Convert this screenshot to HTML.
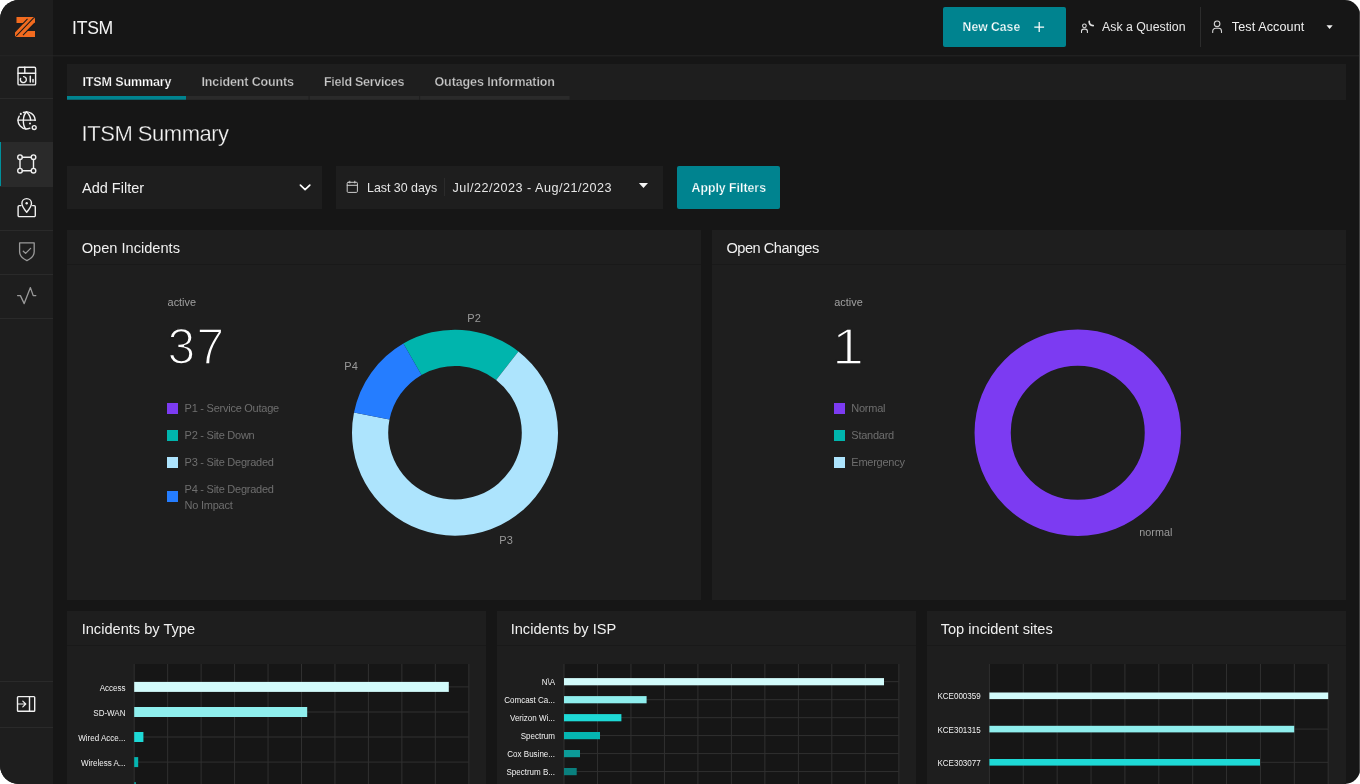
<!DOCTYPE html>
<html lang="en">
<head>
<meta charset="utf-8">
<title>ITSM Summary</title>
<style>
*{margin:0;padding:0;box-sizing:border-box}
html,body{width:1360px;height:784px;overflow:hidden;background:#fff}
body{font-family:"Liberation Sans", sans-serif;-webkit-font-smoothing:antialiased}
.app{position:relative;width:1360px;height:784px;background:#161616;border-radius:19px 15px 15px 18.5px;overflow:hidden}
.layer{position:absolute;left:0;top:0;width:1360px;height:784px;will-change:transform}
.b{position:absolute;display:block;border:0}
.t{position:absolute;display:block;white-space:nowrap;font-weight:400;font-style:normal;text-decoration:none}
ul{list-style:none}
.big{-webkit-text-stroke:1.6px #1e1e1e;paint-order:fill stroke}
.semi{-webkit-text-stroke:0.25px #1e1e1e;paint-order:fill stroke}
.thin{-webkit-text-stroke:0.3px #161616;paint-order:fill stroke}
.one{transform:scaleX(1.16);transform-origin:25px 0}
.onteal{-webkit-text-stroke-color:#00838f}
</style>
</head>
<body>
<div class="app"><div class="layer">
<aside class="sidebar">
<div class="b side-bg" style="left:0px;top:0px;width:53px;height:784px;background:#1e1e1e;"></div>
<svg class="b logo" style="left:15px;top:17px;" width="20" height="20" viewBox="0 0 20 20"><path fill="#f26b1f" d="M1.5 0H18.6L20 1.4V5.6L11.6 14H20V20H1.7L0 18.9V15.4L9 6H1.5Z"/><path stroke="#1b1b1b" stroke-width="1.05" fill="none" d="M18.9 0.6L1.3 18.9M12.5 1.9L8.2 6.3M8.0 18.1L19.8 6.2"/></svg>
<nav><ul class="nav">
<li class="b sep" style="left:0px;top:98px;width:53px;height:1px;background:#2a2a2a;"></li>
<li class="b sep" style="left:0px;top:186px;width:53px;height:1px;background:#2a2a2a;"></li>
<li class="b sep" style="left:0px;top:230px;width:53px;height:1px;background:#2a2a2a;"></li>
<li class="b sep" style="left:0px;top:274px;width:53px;height:1px;background:#2a2a2a;"></li>
<li class="b sep" style="left:0px;top:318px;width:53px;height:1px;background:#2a2a2a;"></li>
<li class="b nav-active" style="left:0px;top:142px;width:53px;height:44px;background:#2a2a2a;border-left:1px solid #00909c;box-sizing:border-box;"></li>
<li><a><svg class="b ico" style="left:16px;top:65px;" width="22" height="22" viewBox="0 0 22 22"><g fill="none" stroke="#f0f0f0" stroke-width="1.4" stroke-linecap="round" stroke-linejoin="round"><rect x="2" y="2.3" width="17.6" height="17.6" rx="1.2"/><path d="M2 8.3H19.6M8.8 2.3V8.3"/><path d="M7.6 11.6A3 3 0 1 1 4.6 13.4"/><path d="M14.3 11.3V17M17 14.5V17" stroke-width="1.5"/></g></svg></a></li>
<li><a><svg class="b ico" style="left:16px;top:109px;" width="22" height="22" viewBox="0 0 22 22"><g fill="none" stroke="#f0f0f0" stroke-width="1.4" stroke-linecap="round" stroke-linejoin="round"><path d="M7.42 3.52A8.5 8.5 0 0 1 19.10 11.40"/><path d="M13.92 19.22A8.5 8.5 0 0 1 3.24 7.15"/><path d="M2.10 11.10H19.40"/><path d="M10.60 2.90C6.40 6.40 6.40 16.40 9.80 19.90"/><path d="M10.60 2.90C13.20 5.40 14.60 8.40 14.70 11.10"/><circle cx="18.20" cy="18.55" r="1.95"/><circle cx="4.80" cy="4.90" r="1.05" fill="#f0f0f0" stroke="none"/><circle cx="14.00" cy="14.60" r="1.0" fill="#f0f0f0" stroke="none"/></g></svg></a></li>
<li><a><svg class="b ico" style="left:16px;top:153px;" width="22" height="22" viewBox="0 0 22 22"><g fill="none" stroke="#f0f0f0" stroke-width="1.4" stroke-linecap="round" stroke-linejoin="round"><circle cx="4" cy="4.2" r="2.3"/><circle cx="17.5" cy="4.2" r="2.3"/><circle cx="4" cy="17.7" r="2.3"/><circle cx="17.5" cy="17.7" r="2.3"/><path d="M6.3 4.2H15.2M6.3 17.7H15.2M4 6.5V15.4M17.5 6.5V15.4"/></g></svg></a></li>
<li><a><svg class="b ico" style="left:16px;top:197px;" width="22" height="22" viewBox="0 0 22 22"><g fill="none" stroke="#f0f0f0" stroke-width="1.4" stroke-linecap="round" stroke-linejoin="round"><path d="M5 8.6H3.3A1.2 1.2 0 0 0 2.1 9.8V18.4A1.2 1.2 0 0 0 3.3 19.6H18.1A1.2 1.2 0 0 0 19.3 18.4V9.8A1.2 1.2 0 0 0 18.1 8.6H16.6"/><path d="M10.7 15.2C7.4 11.2 5.9 8.8 5.9 6.4A4.8 4.8 0 0 1 15.5 6.4C15.5 8.8 14 11.2 10.7 15.2Z"/><circle cx="10.7" cy="6.2" r="1.2" fill="#f0f0f0" stroke="none"/></g></svg></a></li>
<li><a><svg class="b ico" style="left:16px;top:241px;" width="22" height="22" viewBox="0 0 22 22"><g fill="none" stroke="#9a9a9a" stroke-width="1.3" stroke-linecap="round" stroke-linejoin="round"><path d="M3.6 1.8H18.2V10.8C18.2 15 15 17.6 10.9 19.6C6.8 17.6 3.6 15 3.6 10.8Z"/><path d="M7.3 10.2L9.6 12.4L14.6 7.4"/></g></svg></a></li>
<li><a><svg class="b ico" style="left:16px;top:285px;" width="22" height="22" viewBox="0 0 22 22"><g fill="none" stroke="#9a9a9a" stroke-width="1.3" stroke-linecap="round" stroke-linejoin="round"><path d="M1.6 10.6H4.4L8.2 18.6L14.4 2.6L17.2 10.6H19.8"/></g></svg></a></li>
<li class="b sep" style="left:0px;top:681px;width:53px;height:1px;background:#2a2a2a;"></li>
<li class="b sep" style="left:0px;top:727px;width:53px;height:1px;background:#2a2a2a;"></li>
<li><a><svg class="b ico" style="left:16px;top:695px;" width="22" height="18" viewBox="0 0 22 18"><g fill="none" stroke="#f0f0f0" stroke-width="1.4" stroke-linecap="round" stroke-linejoin="round"><rect x="1.5" y="1.6" width="17.2" height="14.6" rx="0.8"/><path d="M13.5 1.6V16.2"/><path d="M1.5 9H9.6M6.8 6.1L9.8 9L6.8 11.9" stroke-width="1.15"/></g></svg></a></li>
</ul></nav>
</aside>
<header class="topbar">
<div class="b hline" style="left:0px;top:55px;width:1360px;height:1px;background:#262626;transform:translateY(0.3px);"></div>
<h2 class="t" style="left:72px;top:17.59px;font-size:17.6px;line-height:20.22px;color:#f4f4f4;letter-spacing:-0.25px;">ITSM</h2>
<button class="b btn" style="left:943px;top:7px;width:123px;height:40px;background:#00838f;border-radius:2px;"></button>
<span class="t semi onteal" style="left:962.6px;top:20.06px;font-size:12.2px;line-height:14.02px;color:#ffffff;font-weight:700;">New Case</span>
<svg class="b plus" style="left:1033px;top:21px;" width="12" height="12" viewBox="0 0 12 12"><path d="M6.2 1.1V10.9M1.3 6H11.1" stroke="#fff" stroke-width="1.25" fill="none"/></svg>
<svg class="b ico" style="left:1079px;top:19px;" width="17" height="16" viewBox="0 0 17 16"><g fill="none" stroke="#e0e0e0" stroke-width="1.05" stroke-linecap="round" stroke-linejoin="round"><circle cx="5.4" cy="6.8" r="1.85"/><path d="M2.5 13.4V12.2A2.1 2.1 0 0 1 4.6 10.1H6.3A2.1 2.1 0 0 1 8.4 12.2V13.4"/><path d="M10.2 2.3Q9.9 6.3 14.2 6.7" stroke-width="1.7"/></g></svg>
<span class="t" style="left:1102.1px;top:20.07px;font-size:12.3px;line-height:14.13px;color:#e8e8e8;">Ask a Question</span>
<div class="b vsep" style="left:1200px;top:7px;width:1px;height:40px;background:#2c2c2c;"></div>
<svg class="b ico" style="left:1210px;top:18px;" width="14" height="17" viewBox="0 0 14 17"><g fill="none" stroke="#d4d4d4" stroke-width="1.1" stroke-linecap="round" stroke-linejoin="round"><circle cx="7.1" cy="5.8" r="2.8"/><path d="M2.7 14.4V13.2A2.9 2.9 0 0 1 5.6 10.3H8.6A2.9 2.9 0 0 1 11.5 13.2V14.4"/></g></svg>
<span class="t" style="left:1231.8px;top:19.8px;font-size:12.6px;line-height:14.48px;color:#f0f0f0;letter-spacing:0.1px;">Test Account</span>
<svg class="b caret" style="left:1325px;top:24px;" width="9" height="6" viewBox="0 0 9 6"><path d="M1.5 1.2H7.7L4.6 5Z" fill="#f0f0f0"/></svg>
</header>
<main>
<nav class="tabs">
<div class="b tabbar" style="left:67px;top:64px;width:1279px;height:36px;background:#1e1e1e;"></div>
<a class="t semi" style="left:82.5px;top:74.69px;font-size:12.5px;line-height:14.36px;color:#ffffff;font-weight:700;letter-spacing:-0.12px;">ITSM Summary</a>
<a class="t semi" style="left:201.5px;top:74.69px;font-size:12.5px;line-height:14.36px;color:#c8c8c8;font-weight:700;letter-spacing:-0.14px;">Incident Counts</a>
<a class="t semi" style="left:324px;top:74.69px;font-size:12.5px;line-height:14.36px;color:#c8c8c8;font-weight:700;letter-spacing:-0.28px;">Field Services</a>
<a class="t semi" style="left:434.5px;top:74.69px;font-size:12.5px;line-height:14.36px;color:#c8c8c8;font-weight:700;letter-spacing:-0.1px;">Outages Information</a>
<svg class="b tab-lines" style="left:67px;top:96px;" width="520" height="4" viewBox="0 0 520 4"><rect x="0" y="0" width="119" height="3.7" fill="#00838f"/><rect x="119" y="0" width="122.6" height="3.7" fill="#2a2a2a"/><rect x="242.6" y="0" width="109.7" height="3.7" fill="#2a2a2a"/><rect x="353.1" y="0" width="149.5" height="3.7" fill="#2a2a2a"/></svg>
</nav>
<h1 class="t thin" style="left:81.6px;top:120.94px;font-size:22px;line-height:25.28px;color:#f4f4f4;letter-spacing:-0.48px;">ITSM Summary</h1>
<div class="filters">
<div class="b select" style="left:67px;top:166px;width:255px;height:43px;background:#1e1e1e;"></div>
<span class="t" style="left:82px;top:179.65px;font-size:14.5px;line-height:16.66px;color:#f0f0f0;">Add Filter</span>
<svg class="b chev" style="left:298px;top:182px;" width="14" height="11" viewBox="0 0 14 11"><path d="M2.4 3.2L7.1 7.6L11.8 3.2" stroke="#fff" stroke-width="1.7" fill="none" stroke-linecap="round" stroke-linejoin="round"/></svg>
<div class="b daterange" style="left:336px;top:166px;width:327px;height:43px;background:#1e1e1e;"></div>
<svg class="b ico" style="left:345px;top:179px;" width="14" height="15" viewBox="0 0 14 15"><g fill="none" stroke="#cfcfcf" stroke-width="1.0" stroke-linecap="round" stroke-linejoin="round"><rect x="2.2" y="3.3" width="10.2" height="10.1" rx="1"/><path d="M2.2 6.3H12.4M4.8 2.2V4M9.8 2.2V4"/></g></svg>
<span class="t" style="left:367px;top:180.98px;font-size:12.4px;line-height:14.25px;color:#e6e6e6;">Last 30 days</span>
<div class="b vsep" style="left:444px;top:178px;width:1px;height:18px;background:#2b2b2b;"></div>
<span class="t" style="left:452.5px;top:180.8px;font-size:12.6px;line-height:14.48px;color:#e6e6e6;letter-spacing:0.5px;">Jul/22/2023 - Aug/21/2023</span>
<svg class="b caret" style="left:637px;top:181px;" width="13" height="9" viewBox="0 0 13 9"><path d="M1.9 2H11L6.45 7Z" fill="#f4f4f4"/></svg>
<button class="b btn" style="left:677px;top:166px;width:103px;height:43px;background:#00838f;border-radius:2px;"></button>
<span class="t semi onteal" style="left:691.5px;top:180.97px;font-size:12.3px;line-height:14.13px;color:#ffffff;font-weight:700;">Apply Filters</span>
</div>
<section class="card">
<div class="b card-bg" style="left:67px;top:230px;width:634px;height:370px;background:#1e1e1e;"></div><div class="b card-sep" style="left:67px;top:264px;width:634px;height:1px;background:#191919;"></div><h3 class="t" style="left:81.7px;top:239.53px;font-size:14.62px;line-height:16.8px;color:#f0f0f0;">Open Incidents</h3>
<span class="t" style="left:167.6px;top:295.96px;font-size:10.9px;line-height:12.52px;color:#a0a0a0;">active</span>
<span class="t big" style="left:167.5px;top:318.63px;font-size:49.8px;line-height:57.22px;color:#ffffff;letter-spacing:1.4px;">37</span>
<ul class="legend">
<li><i class="b sw" style="left:167px;top:403px;width:11px;height:11px;background:#7c3bf2;"></i><span class="t" style="left:184.6px;top:402.17px;font-size:11px;line-height:12.64px;color:#6e6e6e;letter-spacing:-0.25px;">P1 - Service Outage</span></li>
<li><i class="b sw" style="left:167px;top:429.9px;width:11px;height:11px;background:#00b5ad;"></i><span class="t" style="left:184.6px;top:429.07px;font-size:11px;line-height:12.64px;color:#6e6e6e;letter-spacing:-0.25px;">P2 - Site Down</span></li>
<li><i class="b sw" style="left:167px;top:456.8px;width:11px;height:11px;background:#ade4fd;"></i><span class="t" style="left:184.6px;top:455.97px;font-size:11px;line-height:12.64px;color:#6e6e6e;letter-spacing:-0.25px;">P3 - Site Degraded</span></li>
<li><i class="b sw" style="left:167px;top:491px;width:11px;height:11px;background:#257dff;"></i><span class="t" style="left:184.6px;top:482.87px;font-size:11px;line-height:12.64px;color:#6e6e6e;letter-spacing:-0.25px;">P4 - Site Degraded</span><span class="t" style="left:184.6px;top:498.87px;font-size:11px;line-height:12.64px;color:#6e6e6e;letter-spacing:-0.25px;">No Impact</span></li>
</ul>
<svg class="b donut" style="left:340px;top:300px;" width="240" height="260" viewBox="0 0 240 260"><path fill="#00b5ad" d="M63.34 43.59A103 103 0 0 1 178.41 51.53L156.13 80.06A66.8 66.8 0 0 0 81.5 74.91Z"/><path fill="#ade4fd" d="M178.41 51.53A103 103 0 1 1 14 112.52L49.49 119.61A66.8 66.8 0 1 0 156.13 80.06Z"/><path fill="#257dff" d="M14 112.52A103 103 0 0 1 63.34 43.59L81.5 74.91A66.8 66.8 0 0 0 49.49 119.61Z"/><g font-family='"Liberation Sans", sans-serif' font-size="11" fill="#9a9a9a"><text x="127.3" y="22">P2</text><text x="4.3" y="70">P4</text><text x="159.3" y="244.3">P3</text></g></svg>
</section>
<section class="card">
<div class="b card-bg" style="left:712px;top:230px;width:634px;height:370px;background:#1e1e1e;"></div><div class="b card-sep" style="left:712px;top:264px;width:634px;height:1px;background:#191919;"></div><h3 class="t" style="left:726.5px;top:239.53px;font-size:14.62px;line-height:16.8px;color:#f0f0f0;letter-spacing:-0.5px;">Open Changes</h3>
<span class="t" style="left:834.3px;top:295.96px;font-size:10.9px;line-height:12.52px;color:#a0a0a0;">active</span>
<span class="t big one" style="left:836px;top:318.82px;font-size:49.6px;line-height:56.99px;color:#ffffff;">1</span>
<ul class="legend">
<li><i class="b sw" style="left:834px;top:403px;width:11px;height:11px;background:#7c3bf2;"></i><span class="t" style="left:851.3px;top:402.17px;font-size:11px;line-height:12.64px;color:#6e6e6e;letter-spacing:-0.25px;">Normal</span></li>
<li><i class="b sw" style="left:834px;top:429.9px;width:11px;height:11px;background:#00b5ad;"></i><span class="t" style="left:851.3px;top:429.07px;font-size:11px;line-height:12.64px;color:#6e6e6e;letter-spacing:-0.25px;">Standard</span></li>
<li><i class="b sw" style="left:834px;top:456.8px;width:11px;height:11px;background:#ade4fd;"></i><span class="t" style="left:851.3px;top:455.97px;font-size:11px;line-height:12.64px;color:#6e6e6e;letter-spacing:-0.25px;">Emergency</span></li>
</ul>
<svg class="b donut" style="left:960px;top:300px;" width="240" height="260" viewBox="0 0 240 260"><circle cx="117.75" cy="132.75" r="85.1" fill="none" stroke="#7c3bf2" stroke-width="36.2"/><g font-family='"Liberation Sans", sans-serif' font-size="10.8" fill="#9a9a9a"><text x="179.3" y="236">normal</text></g></svg>
</section>
<section class="card"><div class="b card-bg" style="left:67px;top:611px;width:419px;height:173px;background:#1e1e1e;"></div><div class="b card-sep" style="left:67px;top:645px;width:419px;height:1px;background:#191919;"></div><h3 class="t" style="left:81.7px;top:620.53px;font-size:14.62px;line-height:16.8px;color:#f0f0f0;">Incidents by Type</h3><svg class="b chart" style="left:67px;top:611px;" width="419" height="173" viewBox="0 0 419 173"><rect x="67.2" y="53" width="334.6" height="120" fill="#161616"/><path d="M67.2 53V173M100.66 53V173M134.12 53V173M167.58 53V173M201.04 53V173M234.5 53V173M267.96 53V173M301.42 53V173M334.88 53V173M368.34 53V173M401.8 53V173M67.2 75.9H401.8M67.2 101H401.8M67.2 126H401.8M67.2 151.1H401.8M67.2 176.2H401.8" stroke="#303030" stroke-width="1" fill="none"/><rect x="67.2" y="70.9" width="314.6" height="10" fill="#d2fbfb"/><rect x="67.2" y="96" width="173" height="10" fill="#8feeed"/><rect x="67.2" y="121" width="9.2" height="10" fill="#1ed9d6"/><rect x="67.2" y="146.1" width="4" height="10" fill="#05b5b1"/><rect x="67.2" y="171.2" width="1.8" height="10" fill="#0c9b98"/><g font-family='"Liberation Sans", sans-serif' font-size="9.5" fill="#f2f2f2" text-anchor="end"><text transform="translate(58.5 79.5) scale(0.845 1)">Access</text><text transform="translate(58.5 104.6) scale(0.845 1)">SD-WAN</text><text transform="translate(58.5 129.6) scale(0.845 1)">Wired Acce...</text><text transform="translate(58.5 154.7) scale(0.845 1)">Wireless A...</text></g></svg></section>
<section class="card"><div class="b card-bg" style="left:497px;top:611px;width:419px;height:173px;background:#1e1e1e;"></div><div class="b card-sep" style="left:497px;top:645px;width:419px;height:1px;background:#191919;"></div><h3 class="t" style="left:510.7px;top:620.53px;font-size:14.62px;line-height:16.8px;color:#f0f0f0;">Incidents by ISP</h3><svg class="b chart" style="left:497px;top:611px;" width="419" height="173" viewBox="0 0 419 173"><rect x="67" y="53" width="334.8" height="120" fill="#161616"/><path d="M67 53V173M100.48 53V173M133.96 53V173M167.44 53V173M200.92 53V173M234.4 53V173M267.88 53V173M301.36 53V173M334.84 53V173M368.32 53V173M401.8 53V173M67 70.7H401.8M67 88.7H401.8M67 106.7H401.8M67 124.6H401.8M67 142.6H401.8M67 160.6H401.8" stroke="#303030" stroke-width="1" fill="none"/><rect x="67" y="67.1" width="320" height="7.2" fill="#d2fbfb"/><rect x="67" y="85.1" width="82.6" height="7.2" fill="#8feeed"/><rect x="67" y="103.1" width="57.4" height="7.2" fill="#1ed9d6"/><rect x="67" y="121" width="36" height="7.2" fill="#05b5b1"/><rect x="67" y="139" width="16" height="7.2" fill="#0c9b98"/><rect x="67" y="157" width="12.7" height="7.2" fill="#0a807e"/><g font-family='"Liberation Sans", sans-serif' font-size="9.5" fill="#f2f2f2" text-anchor="end"><text transform="translate(58 74.3) scale(0.845 1)">N\A</text><text transform="translate(58 92.3) scale(0.845 1)">Comcast Ca...</text><text transform="translate(58 110.3) scale(0.845 1)">Verizon Wi...</text><text transform="translate(58 128.2) scale(0.845 1)">Spectrum</text><text transform="translate(58 146.2) scale(0.845 1)">Cox Busine...</text><text transform="translate(58 164.2) scale(0.845 1)">Spectrum B...</text></g></svg></section>
<section class="card"><div class="b card-bg" style="left:927px;top:611px;width:419px;height:173px;background:#1e1e1e;"></div><div class="b card-sep" style="left:927px;top:645px;width:419px;height:1px;background:#191919;"></div><h3 class="t" style="left:940.7px;top:620.53px;font-size:14.62px;line-height:16.8px;color:#f0f0f0;">Top incident sites</h3><svg class="b chart" style="left:927px;top:611px;" width="419" height="173" viewBox="0 0 419 173"><rect x="62.4" y="53" width="338.8" height="120" fill="#161616"/><path d="M62.4 53V173M96.28 53V173M130.16 53V173M164.04 53V173M197.92 53V173M231.8 53V173M265.68 53V173M299.56 53V173M333.44 53V173M367.32 53V173M401.2 53V173M62.4 84.8H401.2M62.4 118.1H401.2M62.4 151.3H401.2" stroke="#303030" stroke-width="1" fill="none"/><rect x="62.4" y="81.5" width="338.8" height="6.6" fill="#d2fbfb"/><rect x="62.4" y="114.8" width="304.8" height="6.6" fill="#8feeed"/><rect x="62.4" y="148" width="270.6" height="6.6" fill="#1ed9d6"/><g font-family='"Liberation Sans", sans-serif' font-size="9.5" fill="#f2f2f2" text-anchor="end"><text transform="translate(53.7 88.4) scale(0.845 1)">KCE000359</text><text transform="translate(53.7 121.7) scale(0.845 1)">KCE301315</text><text transform="translate(53.7 154.9) scale(0.845 1)">KCE303077</text></g></svg></section>
</main>
<div class="b edge" style="left:1359px;top:0px;width:1px;height:784px;background:#444444;"></div>
</div></div>
</body>
</html>
